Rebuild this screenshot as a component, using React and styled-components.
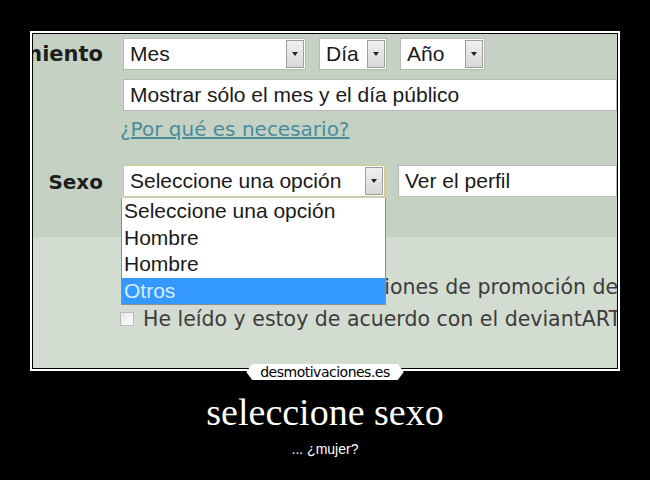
import React from "react";
import styled, { createGlobalStyle } from "styled-components";

const Global = createGlobalStyle`
  html, body { margin: 0; padding: 0; background: #000; }
  body { width: 650px; height: 480px; overflow: hidden; }
`;

const Poster = styled.div`
  width: 650px;
  height: 480px;
  background: #000;
  display: flex;
  flex-direction: column;
  align-items: center;
  padding-top: 31px;
  box-sizing: border-box;
`;

const FrameWrap = styled.div`
  position: relative;
  width: 590px;
`;

const Frame = styled.div`
  border: 2px solid #fff;
  padding: 1px;
  background: #000;
`;

const Shot = styled.div`
  position: relative;
  height: 334px;
  overflow: hidden;
  background: #d3dcd1;
  display: flex;
  flex-direction: column;
  font-family: "DejaVu Sans", Verdana, sans-serif;
`;

const TopBand = styled.div`
  background: #c5d2c3;
  height: 203px;
  padding-top: 4px;
  box-sizing: border-box;
  display: grid;
  grid-template-columns: 70px 1fr;
  column-gap: 20px;
  grid-template-rows: 32px 32px 36px 32px;
  row-gap: 9px;
  align-items: center;
`;

const Label = styled.div`
  display: flex;
  justify-content: flex-end;
  overflow: hidden;
  white-space: nowrap;
  font-weight: bold;
  font-size: ${(p) => p.$size || 21}px;
  color: #1e1e1e;
  grid-row: ${(p) => p.$row};
  grid-column: 1;
  margin-top: ${(p) => p.$nudge || 0}px;
`;

const Fields = styled.div`
  grid-row: ${(p) => p.$row};
  grid-column: 2;
  display: flex;
  gap: 13px;
  align-self: stretch;
  position: relative;
  min-width: 0;
`;

const Box = styled.div`
  box-sizing: border-box;
  height: 32px;
  width: ${(p) => (p.$w ? `${p.$w}px` : "auto")};
  flex: ${(p) => (p.$w ? "none" : "1")};
  background: #fff;
  border: 1px solid ${(p) => (p.$focus ? "#d9c792" : "#b4bcb2")};
  display: flex;
  align-items: center;
  padding-left: 6px;
  font-family: "Liberation Sans", Arial, sans-serif;
  font-size: 21px;
  color: #1a1a1a;
  white-space: nowrap;
  overflow: hidden;
`;

const BoxText = styled.span`
  flex: 1;
  overflow: hidden;
`;

const Arrow = styled.div`
  width: 18px;
  height: 28px;
  margin-right: 1px;
  box-sizing: border-box;
  border: 1px solid #9a9f9a;
  background: linear-gradient(#f0f0f0, #d8d8d8);
  display: flex;
  align-items: center;
  justify-content: center;
  &::after {
    content: "";
    border-left: 3.5px solid transparent;
    border-right: 3.5px solid transparent;
    border-top: 4px solid #222;
  }
`;

const Link = styled.a`
  grid-row: 3;
  grid-column: 2;
  align-self: start;
  margin-left: -3px;
  margin-top: -3px;
  font-size: 20px;
  color: #4a8c9e;
  text-decoration: underline;
`;

const Dropdown = styled.ul`
  position: absolute;
  left: -2px;
  top: 33px;
  width: 263px;
  margin: 0;
  padding: 0;
  list-style: none;
  background: #fff;
  border: 1px solid #8a8f8a;
  border-top: none;
  z-index: 2;
  font-family: "Liberation Sans", Arial, sans-serif;
  font-size: 21px;
`;

const Option = styled.li`
  height: 26.5px;
  line-height: 26.5px;
  padding-left: 2px;
  color: ${(p) => (p.$active ? "#d8ecff" : "#1a1a1a")};
  background: ${(p) => (p.$active ? "#3399ff" : "transparent")};
`;

const Lower = styled.div`
  display: flex;
  flex-direction: column;
  padding-left: 87px;
  padding-top: 38px;
  gap: 8px;
`;

const Line = styled.div`
  display: flex;
  align-items: center;
  gap: 9px;
  margin-left: ${(p) => p.$indent || 0}px;
  font-size: 20.5px;
  color: #3c3c3c;
  white-space: nowrap;
`;

const Check = styled.span`
  width: 14px;
  height: 14px;
  box-sizing: border-box;
  border: 1px solid #b8bcb8;
  background: linear-gradient(135deg, #e4e4e4, #fff);
  flex: none;
`;

const Badge = styled.div`
  position: absolute;
  left: 50%;
  bottom: -9px;
  transform: translateX(-50%);
  background: #fff;
  color: #000;
  height: 16px;
  padding: 0 14px;
  display: flex;
  align-items: center;
  font-family: "DejaVu Sans", sans-serif;
  font-size: 14px;
  letter-spacing: -0.5px;
  clip-path: polygon(6px 0, calc(100% - 6px) 0, 100% 50%, calc(100% - 6px) 100%, 6px 100%, 0 50%);
`;

const Title = styled.div`
  margin-top: 19px;
  font-family: "Liberation Serif", "Times New Roman", serif;
  font-size: 38px;
  color: #fff;
  line-height: 44px;
`;

const Caption = styled.div`
  margin-top: 7px;
  font-family: "Liberation Sans", Arial, sans-serif;
  font-size: 14px;
  color: #fff;
`;

export default function App() {
  return (
    <>
      <Global />
      <Poster>
        <FrameWrap>
          <Frame>
            <Shot>
              <TopBand>
                <Label $row={1}>Nacimiento</Label>
                <Fields $row={1}>
                  <Box $w={183}>
                    <BoxText>Mes</BoxText>
                    <Arrow />
                  </Box>
                  <Box $w={68}>
                    <BoxText>Día</BoxText>
                    <Arrow />
                  </Box>
                  <Box $w={85}>
                    <BoxText>Año</BoxText>
                    <Arrow />
                  </Box>
                </Fields>
                <Fields $row={2}>
                  <Box>Mostrar sólo el mes y el día público</Box>
                </Fields>
                <Link href="#">¿Por qué es necesario?</Link>
                <Label $row={4} $nudge={2} $size={20}>Sexo</Label>
                <Fields $row={4}>
                  <Box $w={262} $focus>
                    <BoxText>Seleccione una opción</BoxText>
                    <Arrow />
                  </Box>
                  <Box>Ver el perfil</Box>
                  <Dropdown>
                    <Option>Seleccione una opción</Option>
                    <Option>Hombre</Option>
                    <Option>Hombre</Option>
                    <Option $active>Otros</Option>
                  </Dropdown>
                </Fields>
              </TopBand>
              <Lower>
                <Line $indent={8}>Quiero recibir comunicaciones de promoción de deviantART</Line>
                <Line>
                  <Check />
                  He leído y estoy de acuerdo con el deviantART
                </Line>
              </Lower>
            </Shot>
          </Frame>
          <Badge>desmotivaciones.es</Badge>
        </FrameWrap>
        <Title>seleccione sexo</Title>
        <Caption>... ¿mujer?</Caption>
      </Poster>
    </>
  );
}
